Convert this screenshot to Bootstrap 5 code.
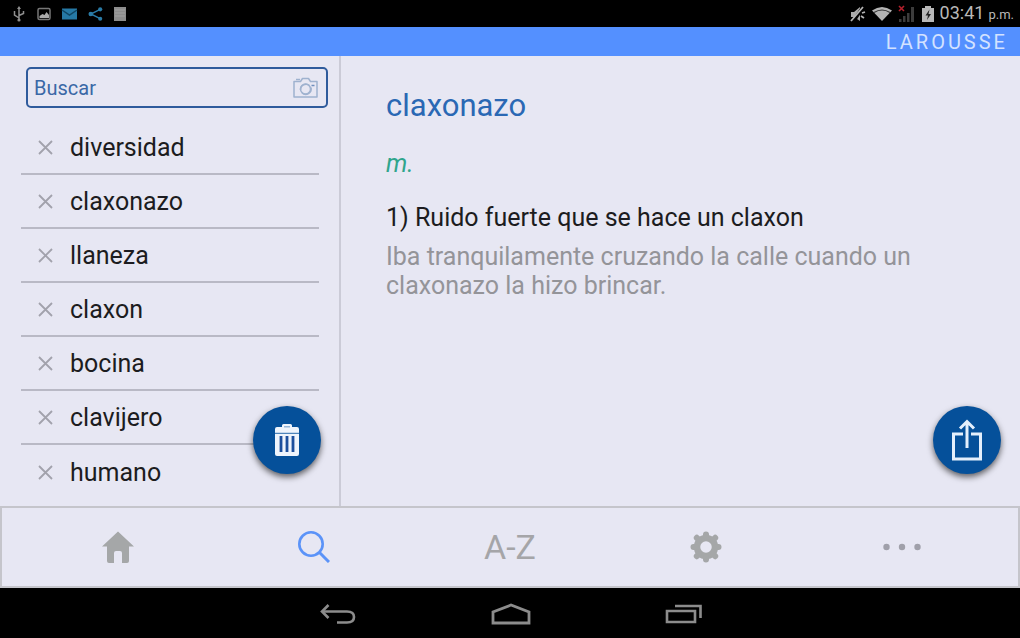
<!DOCTYPE html>
<html lang="es">
<head>
<meta charset="utf-8">
<meta name="viewport" content="width=device-width, initial-scale=1">
<title>Larousse</title>
<link href="https://cdn.jsdelivr.net/npm/bootstrap@5.3.0/dist/css/bootstrap.min.css" rel="stylesheet">
<style>
  body { font-family: Roboto, "Noto Sans", sans-serif; background: #e7e7f3; color: #1c1c20; }
  svg { display: block; flex: none; }
  button { font-family: inherit; }
  .status-bar { height: 27px; padding: 0 6px 0 11px; color: #b4b4b4; }
  .status-left { gap: 10px; }
  .status-right { gap: 6px; }
  .clock { gap: 4px; font-size: 18px; line-height: 24px; color: #b8b8b8; }
  .clock small { font-size: 13px; }
  .brand-bar { height: 29px; padding-right: 12px; background: #5490ff; color: #d3e2ff; font-size: 20px; letter-spacing: 3px; line-height: 30px; }
  .sidebar { width: 341px; border-right: 2px solid #cbcbd7; }
  .search-box { height: 41px; margin: 11px 11px 0 26px; border: 2px solid #2f5b9c; border-radius: 5px; padding: 0 8px 0 6px; }
  .search-box input { color: #3a68a6; font-size: 20px; line-height: 24px; background: none; outline: 0; }
  .search-box input::placeholder { color: #3a68a6; opacity: 1; }
  .history { margin: 13px 20px 0 21px; }
  .history li { height: 54px; border-bottom: 2px solid #b9b9c5; padding-left: 17px; gap: 17px; }
  .history li:last-child { border-bottom: 0; }
  .history a { color: #1c1c20; font-size: 25px; line-height: 32px; padding-top: 2px; }
  .plain { background: none; border: 0; padding: 0; }
  .fab { width: 68px; height: 68px; background: #05509a; box-shadow: 0 3px 6px rgba(0,0,0,.6); bottom: 32px; }
  .fab-trash { right: 18px; }
  .fab-share { right: 19px; }
  .entry { padding: 30px 100px 0 45px; }
  .entry h1 { font-size: 31px; line-height: 40px; color: #2a68b4; }
  .pos { font-size: 25px; line-height: 32px; margin-top: 22px; color: #2fa58c; }
  .sense { font-size: 25px; line-height: 32px; margin-top: 22px; }
  .example { font-size: 25px; line-height: 29px; margin-top: 8px; color: #949499; }
  .tabs { height: 82px; border: 2px solid #c5c5cb; padding: 0 18px; }
  .tabs button { color: #a5a5a8; font-size: 34px; line-height: 40px; }
  .tabs .current { color: #5b93f8; }
  .sys-bar { height: 50px; padding: 2px 0 0 2px; color: #8c8c8c; }
  .sys-bar button { width: 173px; color: inherit; }
</style>
</head>
<body class="vh-100 d-flex flex-column overflow-hidden">

<div class="status-bar bg-black d-flex align-items-center justify-content-between">
  <div class="status-left d-flex align-items-center">
    <svg width="16" height="16" viewBox="0 0 16 16" fill="none" stroke="#8f8f8f" stroke-width="1.5"><path d="M8 14V2M8 12L3.500 9V5M8 9.500l4.500-2V5"/><path d="M8 0l2 3H6z" fill="#8f8f8f" stroke="none"/><circle cx="8" cy="14" r="1.600" fill="#8f8f8f" stroke="none"/></svg>
    <svg width="14" height="14" viewBox="0 0 14 14"><rect x="1" y="1.500" width="12" height="11" rx="1.500" fill="none" stroke="#777" stroke-width="1.500"/><path d="M2.500 11V9l3-2 2 1 2-3 2.500 3v3z" fill="#aaa"/></svg>
    <svg width="17" height="14" viewBox="0 0 17 14"><rect x="1" y="1.500" width="15" height="11" fill="#2679a5"/><path d="M1 3l7.500 5L16 3" fill="none" stroke="#104663" stroke-width="1.500"/></svg>
    <svg width="15" height="16" viewBox="0 0 16 16" fill="#2a7ba6"><path d="M13 3L3 8l10 5" fill="none" stroke="#2a7ba6" stroke-width="1.500"/><circle cx="13" cy="3" r="2.200"/><circle cx="3" cy="8" r="2.500"/><circle cx="13" cy="13" r="2.200"/></svg>
    <svg width="14" height="16" viewBox="0 0 14 16"><rect x="1" y="1" width="12" height="14" fill="#8d8d8d"/><path d="M2 4h10M2 7h10M2 10h10" stroke="#a2a2a2"/></svg>
  </div>
  <div class="status-right d-flex align-items-center">
    <svg width="17" height="20" viewBox="0 0 17 20"><path d="M2 8h3l6-5v14l-6-4H2z" fill="#a9a9a9"/><path d="M4 18L14 3" stroke="#000" stroke-width="3.500"/><path d="M2 17L14 3M13 9l3-1M12 12l3 2" stroke="#b4b4b4" stroke-width="1.800"/></svg>
    <svg width="20" height="16" viewBox="0 0 20 16"><path d="M0 4.500Q10-2.500 20 4.500L10 15z" fill="#b4b4b4"/><path d="M2 6.500q8-5 16 0" fill="none" stroke="#333" stroke-width="1.200"/></svg>
    <svg width="18" height="18" viewBox="0 0 18 18"><path d="M1 17h2.500v-3H1zM5 17h2.500v-6H5zM9 17h2.500V8H9zM13 17h3V2h-3z" fill="#3c3c3c"/><path d="M1 1l5 5M6 1L1 6" stroke="#b3202c" stroke-width="1.600"/></svg>
    <svg width="12" height="18" viewBox="0 0 12 18"><path d="M3 1h6v2h3v14H0V3h3z" fill="#b8b8b8"/><path d="M7.500 4.500l-4 6h2.500l-1 4.500 4-6H6.500z" fill="#222"/></svg>
    <div class="clock d-flex align-items-baseline text-nowrap"><span>03:41</span><small>p.m.</small></div>
  </div>
</div>

<header class="brand-bar text-end">LAROUSSE</header>

<main class="flex-grow-1 d-flex" style="min-height:0">
  <aside class="sidebar position-relative flex-shrink-0">
    <div class="search-box d-flex align-items-center">
      <input type="text" class="border-0 p-0 flex-grow-1 w-100" placeholder="Buscar" aria-label="Buscar">
      <button class="plain" type="button" aria-label="Cámara">
        <svg width="25" height="22" viewBox="0 0 25 22" fill="none" stroke="#9fb2cf" stroke-width="1.500"><path d="M1 4.500h6.500l2-3h6l2 3H24V20H1z" stroke-linejoin="round"/><path d="M3 2.500h4"/><path d="M7.500 13a5.500 5.500 0 0 1 9-4.500M18 10.500a5.500 5.500 0 0 1-9 5.500"/><circle cx="12.500" cy="12" r="5"/><path d="M18.500 8.500h3" stroke="#6f8fbd"/></svg>
      </button>
    </div>
    <ul class="history list-unstyled">
      <li class="d-flex align-items-center"><button class="plain" type="button" aria-label="Quitar diversidad"><svg width="15" height="15" viewBox="0 0 15 15" stroke="#a2a2ac" stroke-width="1.800"><path d="M1 1l13 13M14 1L1 14"/></svg></button><a href="#" class="text-decoration-none">diversidad</a></li>
      <li class="d-flex align-items-center"><button class="plain" type="button" aria-label="Quitar claxonazo"><svg width="15" height="15" viewBox="0 0 15 15" stroke="#a2a2ac" stroke-width="1.800"><path d="M1 1l13 13M14 1L1 14"/></svg></button><a href="#" class="text-decoration-none">claxonazo</a></li>
      <li class="d-flex align-items-center"><button class="plain" type="button" aria-label="Quitar llaneza"><svg width="15" height="15" viewBox="0 0 15 15" stroke="#a2a2ac" stroke-width="1.800"><path d="M1 1l13 13M14 1L1 14"/></svg></button><a href="#" class="text-decoration-none">llaneza</a></li>
      <li class="d-flex align-items-center"><button class="plain" type="button" aria-label="Quitar claxon"><svg width="15" height="15" viewBox="0 0 15 15" stroke="#a2a2ac" stroke-width="1.800"><path d="M1 1l13 13M14 1L1 14"/></svg></button><a href="#" class="text-decoration-none">claxon</a></li>
      <li class="d-flex align-items-center"><button class="plain" type="button" aria-label="Quitar bocina"><svg width="15" height="15" viewBox="0 0 15 15" stroke="#a2a2ac" stroke-width="1.800"><path d="M1 1l13 13M14 1L1 14"/></svg></button><a href="#" class="text-decoration-none">bocina</a></li>
      <li class="d-flex align-items-center"><button class="plain" type="button" aria-label="Quitar clavijero"><svg width="15" height="15" viewBox="0 0 15 15" stroke="#a2a2ac" stroke-width="1.800"><path d="M1 1l13 13M14 1L1 14"/></svg></button><a href="#" class="text-decoration-none">clavijero</a></li>
      <li class="d-flex align-items-center"><button class="plain" type="button" aria-label="Quitar humano"><svg width="15" height="15" viewBox="0 0 15 15" stroke="#a2a2ac" stroke-width="1.800"><path d="M1 1l13 13M14 1L1 14"/></svg></button><a href="#" class="text-decoration-none">humano</a></li>
    </ul>
    <button class="fab fab-trash position-absolute rounded-circle border-0 p-0 d-flex align-items-center justify-content-center" type="button" aria-label="Borrar historial">
      <svg width="26" height="32" viewBox="0 0 26 32"><path d="M8 3V1.500Q8 0 9.500 0h7Q18 0 18 1.500V3h5q2 0 2 2v4H1V5q0-2 2-2z" fill="#eef4fc"/><path d="M10 2.800h6" stroke="#7da5cf" stroke-width="1.200"/><path d="M1 10h24v20q0 2-2 2H3q-2 0-2-2z" fill="#eef4fc"/><path d="M1 9.200h24" stroke="#6f9bc9"/><path d="M7 12v16M13 12v16M19 12v16" stroke="#1c4f9d" stroke-width="2.800"/></svg>
    </button>
  </aside>

  <article class="position-relative flex-grow-1">
    <div class="entry">
      <h1 class="fw-normal m-0">claxonazo</h1>
      <div class="pos fst-italic">m.</div>
      <div class="sense">1) Ruido fuerte que se hace un claxon</div>
      <div class="example">Iba tranquilamente cruzando la calle cuando un claxonazo la hizo brincar.</div>
    </div>
    <button class="fab fab-share position-absolute rounded-circle border-0 p-0 d-flex align-items-center justify-content-center" type="button" aria-label="Compartir">
      <svg width="32" height="42" viewBox="0 0 32 42" fill="none" stroke="#e4effc" stroke-width="3"><path d="M12 15H2.500v25h27V15H20"/><path d="M16 29V3M9 9.500L16 2.500l7 7"/></svg>
    </button>
  </article>
</main>

<nav class="tabs d-flex align-items-center">
  <button class="plain flex-fill w-100 d-flex justify-content-center" type="button" aria-label="Inicio"><svg width="32" height="32" viewBox="0 0 32 32" fill="#a5a7a8"><path d="M16 0.500L32 15.500h-5V30q0 2-2 2h-5v-10q0-2-2-2h-4q-2 0-2 2v10H7q-2 0-2-2V15.500H0z"/></svg></button>
  <button class="plain current flex-fill w-100 d-flex justify-content-center" type="button" aria-label="Buscar"><svg width="32" height="32" viewBox="0 0 32 32" fill="none" stroke="currentColor"><circle cx="13" cy="13" r="11.700" stroke-width="2.600"/><path d="M21 21l10 10" stroke-width="3"/></svg></button>
  <button class="plain flex-fill w-100" type="button">A-Z</button>
  <button class="plain flex-fill w-100 d-flex justify-content-center" type="button" aria-label="Ajustes"><svg width="32" height="32" viewBox="-16 -16 32 32"><circle r="9" fill="none" stroke="#a5a7a8" stroke-width="6.500"/><g stroke="#a5a7a8" stroke-width="6" stroke-linecap="round"><path d="M0-10v-2.500M0 10v2.500M-10 0h-2.500M10 0h2.500M7.500 7.500l1.700 1.700M-7.500-7.500l-1.700-1.700M7.500-7.500l1.700-1.700M-7.500 7.500l-1.700 1.700"/></g></svg></button>
  <button class="plain flex-fill w-100 d-flex justify-content-center" type="button" aria-label="Más"><svg width="38" height="8" viewBox="0 0 38 8" fill="#a0a0aa"><circle cx="3.500" cy="4" r="3.200"/><circle cx="19" cy="4" r="3.200"/><circle cx="34.500" cy="4" r="3.200"/></svg></button>
</nav>

<div class="sys-bar bg-black d-flex align-items-center justify-content-center">
  <button class="plain d-flex justify-content-center" type="button" aria-label="Atrás"><svg width="36" height="22" viewBox="0 0 36 22" fill="none" stroke="currentColor" stroke-width="2.600"><path d="M2 8.500h25q7 0 7 5.500t-7 5.500H17"/><path d="M8.500 2L2 8.500l6.500 6.500"/></svg></button>
  <button class="plain d-flex justify-content-center" type="button" aria-label="Pantalla de inicio"><svg width="40" height="22" viewBox="0 0 40 22" fill="none" stroke="currentColor" stroke-width="2.800"><path d="M2 20V9L20 2l18 7v11z"/></svg></button>
  <button class="plain d-flex justify-content-center" type="button" aria-label="Recientes"><svg width="38" height="20" viewBox="0 0 38 20" fill="none" stroke="currentColor" stroke-width="2.600"><path d="M2 7h28v11H2z"/><path d="M10 2h25.500v12"/></svg></button>
</div>

<script src="https://cdn.jsdelivr.net/npm/bootstrap@5.3.0/dist/js/bootstrap.bundle.min.js"></script>
</body>
</html>
